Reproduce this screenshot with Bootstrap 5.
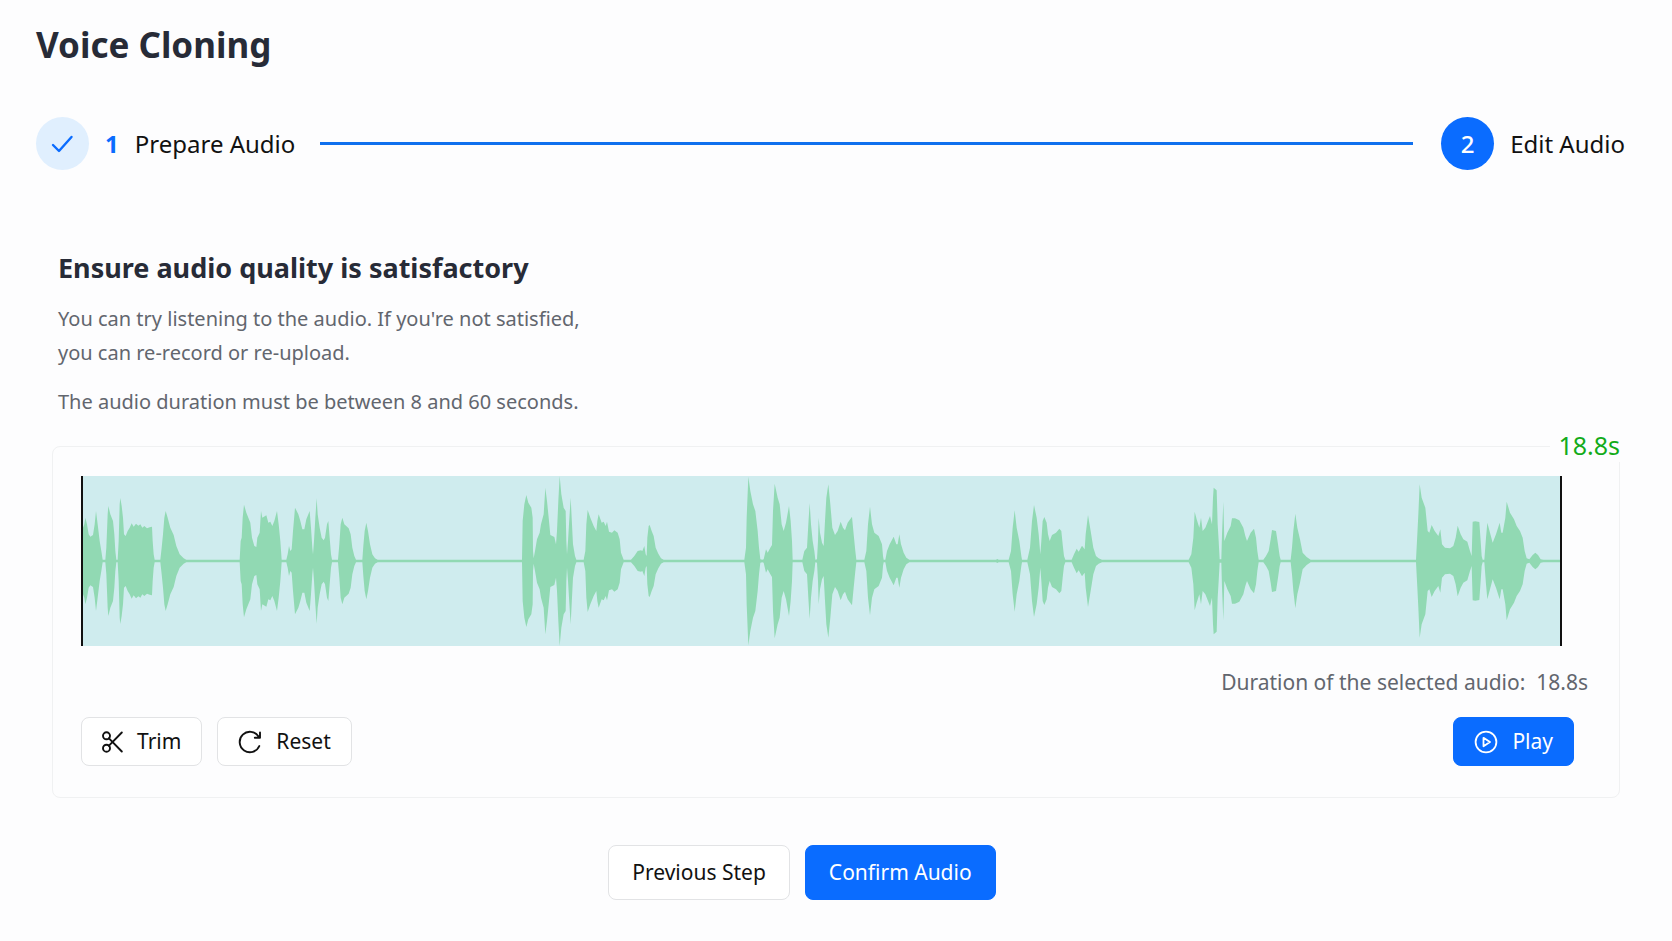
<!DOCTYPE html>
<html lang="en">
<head>
<meta charset="utf-8">
<meta name="viewport" content="width=device-width, initial-scale=1">
<title>Voice Cloning</title>
<link href="https://cdn.jsdelivr.net/npm/bootstrap@5.3.0/dist/css/bootstrap.min.css" rel="stylesheet">
<style>
  :root { --brand: #0a6cff; --ink: #272b37; --muted: #62666e; --page: #fdfdfe; }
  body { font-family: "Noto Sans", "Open Sans", sans-serif; background: var(--page); color: #111; font-size: 21px; line-height: 34px; }
  .page { padding: 20px 36px 40px; }
  .page-title { font-size: 35px; line-height: 50px; font-weight: 700; color: var(--ink); }
  .steps { margin-top: 47px; padding-right: 11px; font-size: 24px; }
  .step-dot { width: 53px; height: 53px; background: var(--brand); color: #fff; font-weight: 500; }
  .step-dot.done { background: #e0effe; color: var(--brand); }
  .step-num { color: var(--brand); font-weight: 700; }
  .step-line { height: 3px; background: #1070ee; margin: 0 28px 0 25px; }
  .content { padding: 0 16px; margin-top: 78px; }
  .intro { padding-left: 6px; color: var(--muted); }
  .intro h2 { font-size: 27px; line-height: 40px; font-weight: 700; color: var(--ink); margin-bottom: 14px; }
  .intro p { font-size: 20px; margin-bottom: 15px; }
  .editor { border: 1px solid #f0f1f2; border-radius: 8px; padding: 29px 28px 31px; margin-top: 27px; }
  .total { right: -2px; top: -19px; padding: 0 1px 0 8px; background: var(--page); color: #12ab1a; font-size: 25px; }
  .wave { height: 170px; margin-right: 29px; background: #cfecee; border: solid #111; border-width: 0 2px; }
  .wave svg { fill: #91d9b3; }
  .selected { margin: 19px 3px 18px 0; color: var(--muted); }
  .btn { --bs-btn-font-size: 21px; --bs-btn-line-height: 33px; --bs-btn-border-radius: 8px; --bs-btn-padding-y: 7px; --bs-btn-padding-x: 20px; }
  .btn-plain { --bs-btn-color: #111; --bs-btn-bg: #fff; --bs-btn-border-color: #e2e3e5; --bs-btn-hover-bg: #f5f7fa; --bs-btn-hover-border-color: #cfd2d6; --bs-btn-active-bg: #eef1f5; }
  .btn-brand { --bs-btn-color: #fff; --bs-btn-bg: var(--brand); --bs-btn-border-color: var(--brand); --bs-btn-hover-color: #fff; --bs-btn-hover-bg: #005ae0; --bs-btn-hover-border-color: #005ae0; --bs-btn-active-color: #fff; --bs-btn-active-bg: #0050c8; }
  .btn-row { gap: 15px; }
  .btn-tool { display: inline-flex; align-items: center; gap: 14px; }
  .tools { padding-right: 17px; }
  .actions { margin-top: 47px; padding-right: 68px; }
  .actions .btn { --bs-btn-padding-y: 10px; --bs-btn-padding-x: 23px; }
  .stroke { fill: none; stroke: currentColor; stroke-linecap: round; stroke-linejoin: round; }
</style>
</head>
<body>
<main class="page">
  <h1 class="page-title mb-0">Voice Cloning</h1>

  <div class="steps d-flex align-items-center">
    <div class="d-flex align-items-center">
      <span class="step-dot done rounded-circle d-flex align-items-center justify-content-center">
        <svg class="stroke" width="24" height="20" viewBox="0 0 24 20" stroke-width="2.4" aria-label="Completed"><path d="M2 11l6 6L20.500 3"/></svg>
      </span>
      <span class="step-num ms-3">1</span>
      <span class="ms-3">Prepare Audio</span>
    </div>
    <div class="step-line flex-grow-1"></div>
    <div class="d-flex align-items-center">
      <span class="step-dot rounded-circle d-flex align-items-center justify-content-center">2</span>
      <span class="ms-3">Edit Audio</span>
    </div>
  </div>

  <section class="content">
    <div class="intro">
      <h2>Ensure audio quality is satisfactory</h2>
      <p>You can try listening to the audio. If you're not satisfied,<br>you can re-record or re-upload.</p>
      <p>The audio duration must be between 8 and 60 seconds.</p>
    </div>

    <div class="editor position-relative">
      <span class="total position-absolute">18.8s</span>
      <div class="wave">
        <svg class="d-block w-100 h-100" viewBox="0 0 4431 510" preserveAspectRatio="none" role="img" aria-label="Audio waveform"><path id="waveform"/></svg>
      </div>
      <p class="selected text-end">Duration of the selected audio:&nbsp; 18.8s</p>
      <div class="tools d-flex justify-content-between">
        <div class="btn-row d-flex">
          <button type="button" class="btn btn-plain btn-tool">
            <svg class="stroke" width="21" height="22" viewBox="0 0 21 22" stroke-width="1.9"><circle cx="4.500" cy="4.800" r="3.500"/><circle cx="4.500" cy="17.200" r="3.500"/><path d="M7 7.300L19.800 20.500M7 14.700L19.800 1.500"/></svg>
            Trim
          </button>
          <button type="button" class="btn btn-plain btn-tool">
            <svg class="stroke" width="24" height="24" viewBox="0 0 24 24" stroke-width="1.900"><path d="M21.300 16A10.200 10.200 0 1 1 20.500 6.500M22 2.500V7.800H16.800"/></svg>
            Reset
          </button>
        </div>
        <button type="button" class="btn btn-brand btn-tool">
          <svg class="stroke" width="24" height="24" viewBox="0 0 24 24" stroke-width="1.800"><circle cx="12" cy="12" r="10.400"/><path d="M9.500 7.800L16 12L9.500 16.200Z"/></svg>
          Play
        </button>
      </div>
    </div>

    <div class="actions btn-row d-flex justify-content-center">
      <button type="button" class="btn btn-plain">Previous Step</button>
      <button type="button" class="btn btn-brand">Confirm Audio</button>
    </div>
  </section>
</main>

<script src="https://cdn.jsdelivr.net/npm/bootstrap@5.3.0/dist/js/bootstrap.bundle.min.js"></script>
<script>
  // Each phrase: offset on the time axis, then "time,level" samples relative to it.
  const phrases = [
    [-38, "38,100 42,110 45,130 50,110 55,80 60,73 68,78 73,110 77,150 82,110 88,60 93,30 97,3 105,3 108,40 112,140 114,165 120,140 128,120 132,80 135,30 138,3 142,3 145,60 148,170 150,189 154,165 158,130 161,80 166,75 172,90 178,100 184,113 190,103 197,112 204,106 210,110 216,100 222,105 230,98 238,101 245,103 247,60 250,20 253,3 270,3 274,40 278,80 282,130 286,150 292,130 300,100 310,78 318,45 328,20 340,8 348,3 508,3 511,60 514,70 517,130 521,169 528,145 540,115 545,70 552,45 558,42 561,70 568,85 572,150 576,130 588,137 594,115 600,118 606,105 612,120 620,150 625,110 630,60 634,3 648,3 652,20 656,45 660,30 664,35 668,90 674,160 684,140 690,120 696,95 702,95 708,125 718,150 722,100 726,40 728,20 731,60 735,130 739,188 742,140 748,100 754,70 760,62 764,70 770,110 774,120 778,70 782,20 785,3 803,3 807,50 811,110 816,130 822,110 835,98 841,80 846,40 852,15 857,3 876,3 879,45 883,90 888,115 893,90 899,50 906,20 914,8 922,3"],
    [1252, "65,3 67,120 72,170 78,198 84,175 93,160 97,130 98,30 100,8 104,30 110,65 118,85 122,110 130,140 135,220 140,180 146,120 150,78 162,72 167,50 170,90 174,180 178,255 183,200 190,160 196,150 198,60 200,20 203,60 206,110 211,190 214,130 218,50 224,15 228,3 250,3 255,30 258,110 262,153 270,130 280,105 288,90 291,120 295,140 304,115 310,118 316,105 320,118 326,88 335,85 342,92 352,85 358,65 362,25 370,3 392,3 402,15 412,30 422,32 426,30 432,45 436,20 439,15 441,70 445,105 448,108 454,90 460,75 466,40 474,22 482,8 490,3"],
    [1912, "72,3 77,40 79,130 84,253 90,210 98,170 105,150 112,90 116,40 120,5 126,3 130,5 137,35 142,25 150,40 155,48 158,150 163,232 172,190 178,170 184,110 190,90 197,115 206,165 211,120 215,60 217,3 246,3 252,30 260,40 264,110 268,174 272,110 277,60 282,30 285,3 290,5 293,60 295,130 299,85 305,55 310,45 314,120 318,190 324,230 330,170 336,100 344,78 352,90 361,118 368,100 374,92 382,115 395,133 400,80 405,30 408,3 432,3 438,30 443,110 449,163 455,110 462,85 475,75 485,50 488,15 490,3 495,3 500,30 508,50 520,73 528,50 532,50 537,80 542,50 550,25 558,10 567,3"],
    [2691, "48,3 52,6 56,3 86,3 93,30 98,100 104,152 110,100 118,60 124,15 126,3 142,3 150,40 156,120 162,168 170,130 176,80 181,20 184,60 188,120 193,132 200,115 204,80 209,60 216,78 228,85 238,97 244,90 248,50 252,15 256,3 275,3 282,20 290,37 296,28 306,46 314,35 317,80 324,138 332,90 340,40 348,15 356,8 366,3 626,3 634,20 640,70 644,148 650,125 658,100 663,130 668,90 676,100 690,135 696,110 699,190 701,220 710,212 713,110 716,60 719,5 724,5 726,80 730,178 733,60 742,85 752,105 756,128 765,128 778,122 790,100 796,75 801,60 812,85 822,97 828,70 832,30 836,3 850,3 858,15 866,30 872,65 876,93 888,90 894,50 899,15 902,3 932,3 936,40 940,90 946,142 952,100 960,65 968,25 980,12 992,3"],
    [3891, "108,3 112,80 115,140 119,230 125,190 136,160 143,90 148,85 155,108 164,90 175,75 181,95 186,50 195,40 210,38 220,45 227,70 233,106 242,80 250,65 262,58 270,30 275,15 278,118 286,119 298,117 302,60 305,15 308,3 313,3 318,70 322,115 330,85 338,55 348,80 359,115 364,85 368,85 376,130 380,178 390,145 402,125 410,105 420,90 428,70 434,30 440,8 448,5 458,18 466,25 474,18 482,5 490,3 540,3"]
  ];
  const middle = 255;
  const quietest = 4;
  const samples = phrases.flatMap(([start, levels]) =>
    levels.split(" ").map(s => s.split(",").map(Number)).map(([t, level]) => [start + t, Math.max(level, quietest)]));
  const upper = samples.map(([t, level]) => `${t} ${middle - level}`);
  const lower = samples.map(([t, level]) => `${t} ${middle + level}`).reverse();
  document.getElementById("waveform").setAttribute("d", `M${[...upper, ...lower].join("L")}Z`);
</script>
</body>
</html>
